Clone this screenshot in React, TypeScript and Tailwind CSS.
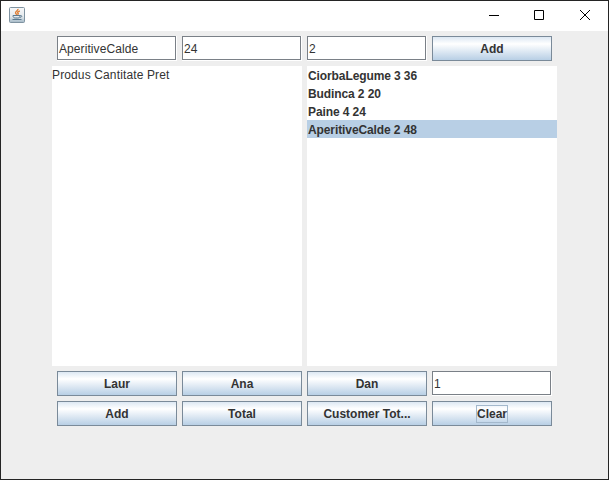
import type { ReactNode } from "react";

function Field({ value }: { value: string }) {
  return (
    <div className="h-[25px] w-[120px] border-r border-b border-white">
      <div className="flex h-6 w-[119px] items-center border border-[#7a8087] bg-white pt-0.5 pl-px">
        <span className="text-[12px] leading-[14px] tracking-[0.08px] whitespace-pre">{value}</span>
      </div>
    </div>
  );
}

function Button({ children, focused = false }: { children: ReactNode; focused?: boolean }) {
  return (
    <button className="flex h-[25px] w-[120px] items-center justify-center border border-[#7a8a99] bg-linear-to-b from-[#dde8f3] via-white via-30% to-[#b8cfe5] text-[12px] leading-[14px] font-bold">
      <span className={focused ? "-my-1 flex h-[18px] items-center border border-[#a3b8cc]" : ""}>{children}</span>
    </button>
  );
}

function JavaIcon() {
  return (
    <svg width="16" height="16" viewBox="0 0 16 16" fill="none">
      <defs>
        <linearGradient id="tile" x1="0" y1="0" x2="0" y2="1">
          <stop stopColor="#f7f8f9" />
          <stop offset="0.6" stopColor="#e4e9ed" />
          <stop offset="1" stopColor="#a3b8c6" />
        </linearGradient>
      </defs>
      <rect x="0.5" y="0.5" width="15" height="15" rx="1" fill="url(#tile)" stroke="#7f93a1" />
      <path d="M9 1.8C9.3 3.7 5.8 4.3 6.6 6.2L7.8 7.8M10.8 4C8.6 4.7 8 5.6 9.2 6.6L8.7 7.8" stroke="#df8038" strokeWidth="1.4" />
      <path d="M4 8.5h7v.5c0 1.2-1 2-2.3 2H6.3C5 11 4 10.200 4 9zM11 8.600c2.600-.4 2.200 1.700-.3 2" stroke="#5b7a90" />
      <path d="M3.500 12.500h9" stroke="#5b7a90" />
    </svg>
  );
}

const items = ["CiorbaLegume 3 36", "Budinca 2 20", "Paine 4 24", "AperitiveCalde 2 48"];

export default function App() {
  return (
    <main className="flex h-[480px] w-[609px] flex-col border border-[#242424] bg-[#eeeeee] font-['Liberation_Sans',Arial,sans-serif] text-[#333333]">
      <header className="flex h-[30px] shrink-0 items-start justify-between bg-white">
        <div className="pt-1.5 pl-2"><JavaIcon /></div>
        <div className="flex h-[30px] text-black">
          {["M9 6.5h10", "M8.5 1.5h9v9h-9z", "M8 1l10 10M18 1L8 11"].map((path, index) => (
            <button key={path} aria-label={["Minimize", "Maximize", "Close"][index]} className="flex w-[46px] justify-center pt-2">
              <svg width="26" height="12" viewBox="0 0 26 12" fill="none"><path d={path} stroke="currentColor" /></svg>
            </button>
          ))}
        </div>
      </header>
      <div className="flex flex-col items-center gap-[5px] pt-[5px]">
        <div className="flex gap-[5px]">
          <Field value="AperitiveCalde" /><Field value="24" /><Field value="2" /><Button>Add</Button>
        </div>
        <div className="flex gap-[5px]">
          <div className="h-[300px] w-[250px] bg-white pt-0.5 text-[12px] leading-[14px] tracking-[0.13px]">Produs Cantitate Pret</div>
          <ul className="h-[300px] w-[250px] bg-white text-[12px] leading-[18px] font-bold tracking-[-0.1px]">
            {items.map((item, index) => (
              <li key={item} className={`h-[18px] pt-px pl-px whitespace-pre ${index === 3 ? "bg-[#b8cfe5]" : ""}`}>{item}</li>
            ))}
          </ul>
        </div>
        <div className="flex gap-[5px]">
          <Button>Laur</Button><Button>Ana</Button><Button>Dan</Button><Field value="1" />
        </div>
        <div className="flex gap-[5px]">
          <Button>Add</Button><Button>Total</Button><Button>Customer Tot...</Button><Button focused>Clear</Button>
        </div>
      </div>
    </main>
  );
}
